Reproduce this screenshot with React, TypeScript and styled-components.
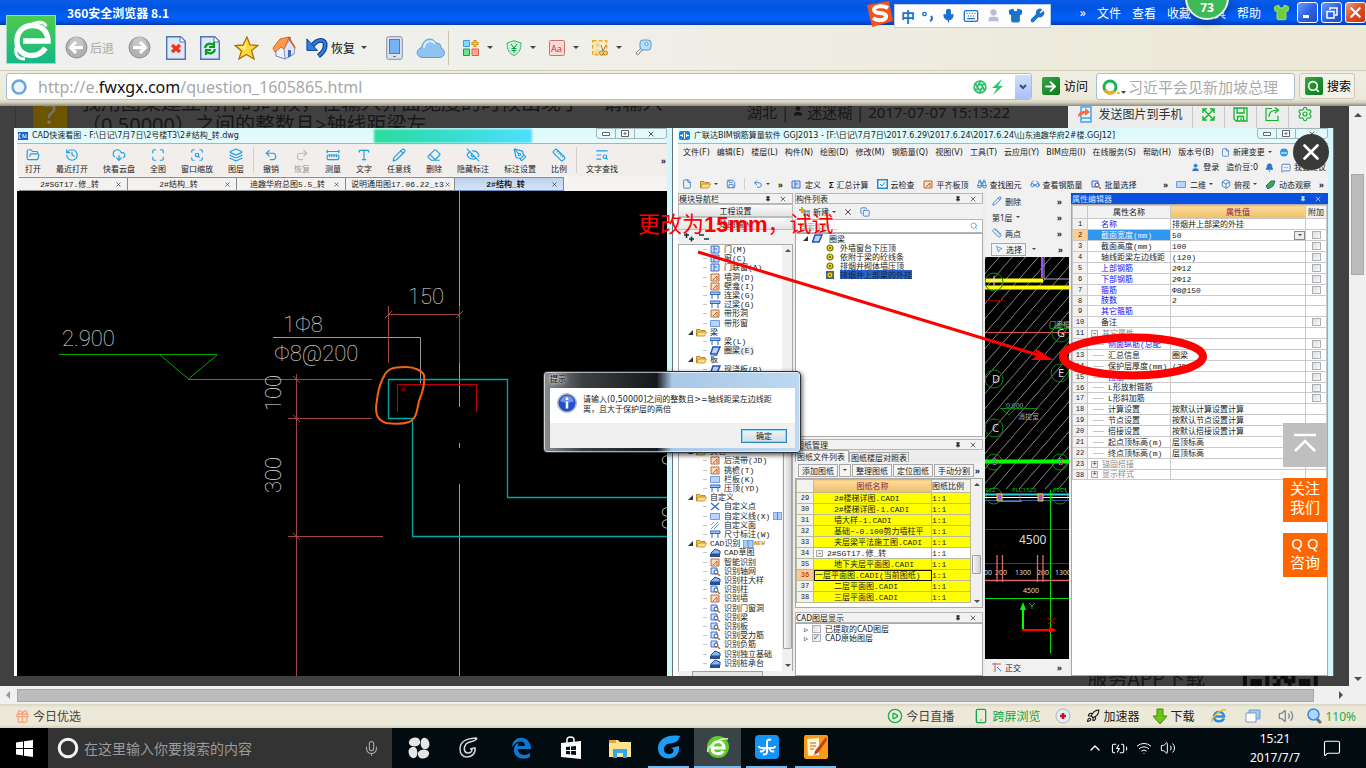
import React from 'react';
import styled, { createGlobalStyle, css } from 'styled-components';
import {
  Mic, Keyboard, Shirt, Wrench, Aperture, ArrowRight, Search, Save, Settings,
  X, FolderOpen, History, CloudDownload, Maximize, ScanSearch, Layers, Undo2, Redo2, Ruler,
  Type, Pencil, Eraser, EyeOff, PenTool, TextSearch, Pin, Bell, User, MessageSquareMore,
  File, Binoculars, Glasses, Box, Rocket, Volume2, Gift, Smartphone, CirclePlay, ChevronUp,
  Wifi, BatteryCharging, MessageSquare, Copy, MousePointer2, RulerDimensionLine,
} from 'lucide-react';

const ui = '"Noto Sans", "Noto Sans CJK SC", sans-serif';
const wide = '"DejaVu Sans", "Noto Sans CJK SC", sans-serif';
const song = '"Liberation Mono", "Noto Sans CJK SC", monospace';

const Global = createGlobalStyle`
  * { box-sizing: border-box; }
  body { margin: 0; background: #000; font-family: ${ui}; font-size: 12px; }
  button, input { font: inherit; color: inherit; padding: 0; margin: 0; border: 0; background: none; border-radius: 0; }
  button { white-space: nowrap; display: flex; align-items: center; justify-content: center; cursor: pointer; }
  a { color: inherit; text-decoration: none; }
  svg { display: block; flex: none; }
`;

const Page = styled.div`
  min-height: 100vh;
  display: flex;
  flex-direction: column;
  overflow: hidden;
  white-space: nowrap;
`;

/* ---------- browser chrome ---------- */

const TitleBar = styled.header`
  position: relative;
  height: 25px;
  display: flex;
  align-items: center;
  padding-left: 67px;
  color: #fff;
  background: linear-gradient(#0a5ce6 0, #0054e3 30%, #0060fb 75%, #0148d4 92%, #013ba8 100%);
`;
const AppName = styled.h1`
  margin: 0;
  flex: 1;
  font: bold 12px/24px "Noto Sans CJK SC", sans-serif;
`;
const Logo = styled.div`
  position: absolute;
  z-index: 3;
  left: 6px;
  top: 15px;
  width: 50px;
  height: 49px;
  border: 1px solid #9ed8bd;
  background: linear-gradient(#4ecb4f, #12b886);
`;
const ImeBar = styled.div`
  position: absolute;
  z-index: 4;
  left: 866px;
  top: 0;
  display: flex;
  align-items: center;
`;
const ImeKeys = styled.div`
  display: flex;
  align-items: center;
  gap: 7px;
  height: 24px;
  width: 157px;
  margin-top: 3px;
  padding-left: 6px;
  color: #1b74c9;
  background: #fdfdfe;
  border: 1px solid #b9cfe4;
  font: bold 14px/20px "Noto Sans CJK SC", sans-serif;
`;
const Menu = styled.nav`
  display: flex;
  align-items: center;
  gap: 11px;
  font-size: 12px;
  margin-right: 12px;
`;
const SkinButton = styled.button`
  margin-right: 4px;
`;
const Speed = styled.div`
  position: absolute;
  z-index: 5;
  left: 1185px;
  top: -24px;
  width: 44px;
  height: 44px;
  padding-top: 21px;
  border-radius: 50%;
  border: 2px solid #e5f2e5;
  background: #3fb957;
  color: #fff;
  text-align: center;
  font: bold 12px/18px "Noto Sans", sans-serif;
  box-shadow: 0 4px 6px rgba(0, 0, 0, 0.25);
`;
const WinButton = styled.button<{ $red?: boolean }>`
  width: 21px;
  height: 21px;
  margin-left: 3px;
  border: 1px solid #fff;
  border-radius: 3px;
  background: ${p => (p.$red ? 'linear-gradient(135deg,#f0a080,#e04a20 50%,#c8380c)' : 'linear-gradient(135deg,#6f9dff,#2b63e4 50%,#1e4cc8)')};
`;

const ToolBar = styled.div`
  height: 46px;
  padding-left: 62px;
  display: flex;
  align-items: center;
  background: linear-gradient(90deg, #eff0ef, #f0f0ea 40%, #ece9d8 90%);
  border-bottom: 1px solid #d2ccb4;
`;
const Tool = styled.button<{ $w: number; $start?: boolean }>`
  width: ${p => p.$w}px;
  height: 44px;
  gap: 2px;
  ${p => p.$start && css`justify-content: flex-start; padding-left: 3px;`}
`;
const Grey = styled.span`
  color: #a9a9a9;
`;
const Restore = styled.span`
  margin: 0 4px 0 1px;
  color: #111;
`;
const PairGroup = styled.div`
  display: flex;
  padding-left: 8px;
  border-left: 1px solid #c9c2a8;
`;
const Pair = styled.button`
  width: 43px;
  height: 34px;
  gap: 8px;
  justify-content: flex-start;
  padding-left: 6px;
`;
const Caret = styled.i<{ $s?: number }>`
  width: 0;
  height: 0;
  flex: none;
  border: ${p => p.$s ?? 3}px solid transparent;
  border-top-color: #444;
  border-bottom: 0;
`;

const AddressBar = styled.form`
  height: 35px;
  padding: 2px 11px 0 6px;
  display: flex;
  align-items: flex-start;
  background: linear-gradient(#efeee4, #ece9d8 80%, #d2cfbf 90%, #8c8a7e);
`;
const Field = styled.label<{ $w?: number }>`
  display: flex;
  align-items: center;
  height: 27px;
  ${p => (p.$w ? css`width: ${p.$w}px;` : css`flex: 1;`)}
  border: 1px solid #a9bfd6;
  border-radius: 3px;
  background: #fff;
  overflow: hidden;
`;
const Url = styled.div`
  flex: 1;
  padding-left: 7px;
  color: #a8a8a8;
  font: 16px/24px "Noto Sans", sans-serif;
  b { font-weight: 400; color: #111; }
`;
const DropButton = styled.button`
  width: 16px;
  height: 24px;
  margin-left: 8px;
  background: linear-gradient(#d3dffb, #a9c0f5);
`;
const Go = styled.button<{ $boxed?: boolean }>`
  height: 26px;
  gap: 4px;
  margin-left: ${p => (p.$boxed ? 4 : 9)}px;
  padding: 0 ${p => (p.$boxed ? 3 : 8)}px 0 ${p => (p.$boxed ? 5 : 1)}px;
  ${p => p.$boxed && css`border: 1px solid #ccc9ba; border-radius: 3px; background: #f3f2ea;`}
`;
const GreenSquare = styled.span`
  display: flex;
  width: 18px;
  height: 18px;
  align-items: center;
  justify-content: center;
  background: linear-gradient(135deg, #3aa548, #067a16);
  border-radius: 2px;
`;
const SearchInput = styled.input`
  flex: 1;
  min-width: 0;
  font: 15px/22px "Noto Sans CJK SC", sans-serif;
  outline: none;
  &::placeholder { color: #aaa; opacity: 1; }
`;

/* ---------- page under the viewer ---------- */

const Viewport = styled.div`
  flex: 1;
  display: flex;
  min-height: 580px;
`;
const Stage = styled.main`
  position: relative;
  flex: 1;
  overflow: hidden;
  display: flex;
  flex-direction: column;
  justify-content: space-between;
  background: #404040;
  color: #171717;
`;
const Question = styled.section`
  display: flex;
  height: 22px;
  margin-left: 15px;
  padding-left: 17px;
  border-left: 1px solid #353535;
`;
const Mark = styled.div`
  width: 34px;
  height: 22px;
  background: #6d5500;
  color: #777;
  text-align: center;
  font: 28px/14px "Noto Sans", sans-serif;
`;
const QuestionText = styled.p`
  margin: -14px 0 0 14px;
  width: 666px;
  font-size: 20px;
  line-height: 22px;
`;
const Meta = styled.div`
  display: flex;
  align-items: center;
  gap: 3px;
  height: 10px;
  font-size: 15px;
`;
const PageFoot = styled.section`
  display: flex;
  justify-content: flex-end;
  height: 15px;
  gap: 38px;
  padding-right: 24px;
  font: 20px/14px "Noto Sans CJK SC", sans-serif;
`;

const SendBar = styled.div`
  position: absolute;
  right: 29px;
  top: 0;
  height: 22px;
  display: flex;
  gap: 1px;
  background: #c8c8c8;
  color: #2b2b2b;
`;
const SendButton = styled.button<{ $w: number }>`
  width: ${p => p.$w}px;
  gap: 6px;
  padding-bottom: 6px;
  background: #ededed;
  color: #11b52c;
  span { color: #333; }
`;
const CloseViewer = styled.button`
  position: absolute;
  z-index: 6;
  right: 20px;
  top: 28px;
  width: 36px;
  height: 36px;
  border-radius: 50%;
  background: #3a3a3a;
  color: #fff;
`;
const SideStack = styled.aside`
  position: absolute;
  z-index: 6;
  right: 22px;
  top: 317px;
  display: flex;
  flex-direction: column;
  gap: 11px;
`;
const SideButton = styled.a<{ $grey?: boolean }>`
  width: 44px;
  height: 44px;
  display: flex;
  align-items: center;
  justify-content: center;
  text-align: center;
  white-space: normal;
  color: #fff;
  font-size: 15px;
  line-height: 19px;
  padding: 0 6px 4px;
  background: ${p => (p.$grey ? '#bfbfbf' : '#ff6600')};
`;

/* ---------- the enlarged picture ---------- */

const Shot = styled.div`
  position: absolute;
  inset: 22px 15px 10px 14px;
  display: flex;
  color: #222;
  font-size: 8px;
  line-height: 9px;
`;
const Win = styled.section<{ $right?: boolean }>`
  flex: 1;
  min-width: 0;
  display: flex;
  flex-direction: column;
  padding: 0 5px 0 ${p => (p.$right ? 5 : 3)}px;
  background: linear-gradient(90deg, #fff, #d3f6fb);
  border-right: 1px solid #5d7480;
  overflow: hidden;
`;
const WinTitle = styled.div`
  height: 16px;
  display: flex;
  align-items: center;
  gap: 4px;
  padding-left: 1px;
  background: linear-gradient(#dcf9fb, #e6fcfd);
  border-bottom: 1px solid #aab4b6;
  font-family: ${wide};
`;
const Smear = styled.span`
  flex: 1;
  margin-right: 60px;
  height: 14px;
  display: flex;
  justify-content: flex-end;
  &::before {
    content: '';
    width: 158px;
    height: 14px;
    background: linear-gradient(90deg, #2bdc9b, #38dcd0 50%, #4fe0ff);
    filter: blur(1px);
  }
`;
const Caption = styled.div`
  display: flex;
  align-self: flex-start;
  height: 11px;
  border: 1px solid #a5b4ba;
  border-radius: 0 0 3px 3px;
  button { width: 19px; border-right: 1px solid #a5b4ba; color: #555; }
  button:last-child { width: 31px; border: 0; }
`;
const CadTools = styled.div`
  height: 32px;
  display: flex;
  align-items: center;
  gap: 15px;
  padding: 0 1px 0 8px;
  background: #f1eeec;
`;
const CadTool = styled.button<{ $dim?: boolean }>`
  flex-direction: column;
  gap: 2px;
  color: ${p => (p.$dim ? '#999' : '#1d1d1d')};
  svg { color: ${p => (p.$dim ? '#bbb' : '#1ba1ea')}; }
`;
const Split = styled.i<{ $tall?: boolean }>`
  width: 1px;
  height: ${p => (p.$tall ? 26 : 12)}px;
  margin: 0 ${p => (p.$tall ? -6 : 0)}px;
  background: #d5cfcb;
`;
const Push = styled.span`
  margin-left: auto;
  font-weight: bold;
`;
const CadTabs = styled.div`
  height: 15px;
  display: flex;
  padding: 1px 0 0 2px;
  background: #f6f4f3;
`;
const CadTab = styled.button<{ $on?: boolean }>`
  width: 109px;
  height: 14px;
  padding: 0 5px;
  justify-content: space-between;
  font-family: ${song};
  border: 1px solid #8c8c8c;
  border-left-width: 0;
  background: #f4f2f1;
  ${p => p.$on && css`background: linear-gradient(#bcd0ee, #d7e3f5); border-color: #6c8fc5; font-weight: bold;`}
  span { flex: 1; }
`;
const Canvas = styled.div`
  flex: 1;
  min-height: 0;
  background: #000;
  overflow: hidden;
  svg { width: 100%; height: 100%; }
`;

const Bar = styled.div<{ $h: number; $gap?: number; $pad?: number; $end?: boolean }>`
  height: ${p => p.$h}px;
  flex: none;
  display: flex;
  align-items: center;
  gap: ${p => p.$gap ?? 6}px;
  padding: 0 ${p => p.$pad ?? 4}px;
  ${p => p.$end && css`justify-content: flex-end;`}
  background: #f1f1f1;
`;
const MenuBar = styled(Bar)`
  font-family: ${wide};
`;
const BarGroup = styled.div<{ $gap: number }>`
  display: flex;
  align-items: center;
  gap: ${p => p.$gap}px;
  margin-left: auto;
`;
const Mini = styled.button<{ $box?: boolean }>`
  gap: 3px;
  height: 12px;
  svg { color: #2f74c8; }
  ${p => p.$box && css`height: 13px; padding: 0 3px; border: 1px solid #a9a9a9; background: #f4f4f4;`}
`;
const Body = styled.div`
  flex: 1;
  min-height: 0;
  display: flex;
  gap: 2px;
  background: #ececec;
`;
const Column = styled.div<{ $w?: number }>`
  ${p => (p.$w ? css`width: ${p.$w}px;` : css`flex: 1;`)}
  display: flex;
  flex-direction: column;
  min-height: 0;
  min-width: 0;
`;
const PanelHead = styled.div<{ $blue?: boolean }>`
  height: 11px;
  flex: none;
  display: flex;
  align-items: center;
  gap: 8px;
  padding-right: 5px;
  border: 1px solid #b5b5b5;
  background: #f2f2f2;
  span { flex: 1; }
  ${p => p.$blue && css`background: #0a50e0; border-color: #0a50e0; color: #d8e6ff;`}
`;
const NavButton = styled.button`
  height: 13px;
  flex: none;
  border: 1px solid #bdbdbd;
  background: linear-gradient(#fafafa, #e4e4e4);
`;
const White = styled.div<{ $h?: number }>`
  ${p => (p.$h ? css`height: ${p.$h}px; flex: none;` : css`flex: 1; min-height: 0;`)}
  overflow: hidden;
  background: #fff;
  border: 1px solid #a9a9a9;
`;
const SheetArea = styled(White)`
  display: flex;
`;
const NavArea = styled.div`
  flex: 1;
  min-height: 0;
  display: flex;
  border: 1px solid #a9a9a9;
  border-bottom: 0;
  background: #fff;
  overflow: hidden;
`;
const NavTree = styled.ul`
  list-style: none;
  flex: 1;
  height: 423px;
  margin: 0;
  padding: 0;
  display: grid;
  grid-auto-rows: 1fr;
`;
const NavRow = styled.li<{ $leaf?: boolean; $on?: boolean }>`
  display: flex;
  align-items: center;
  gap: 3px;
  min-height: 0;
  height: 9px;
  margin-left: ${p => (p.$leaf ? 24 : 9)}px;
  font-family: ${song};
  ${p => p.$leaf && css`&::before { content: ''; width: 4px; border-top: 1px solid #c4c4c4; }`}
  span { ${p => p.$on && css`background: #ececec;`} }
`;
const ScrollBar = styled.div`
  width: 11px;
  flex: none;
  display: flex;
  flex-direction: column;
  align-items: center;
  justify-content: space-between;
  padding: 4px 0;
  background: #f0f0f0;
`;
const Thumb = styled.i<{ $h: number; $top: number }>`
  width: 9px;
  height: ${p => p.$h}px;
  margin-top: ${p => p.$top}px;
  margin-bottom: auto;
  border: 1px solid #a0a0a0;
  border-radius: 1px;
  background: linear-gradient(90deg, #f6f6f6, #d0d0d0);
`;
const NavScroll = styled.div`
  height: 5px;
  flex: none;
  display: flex;
  padding: 0 30px 0 14px;
  background: #f0f0f0;
  i { flex: 1; border: 1px solid #a0a0a0; border-bottom: 0; background: #e4e4e4; }
`;
const TreeRow = styled.div<{ $in: number; $on?: boolean }>`
  height: 9px;
  display: flex;
  align-items: center;
  gap: 4px;
  padding-left: ${p => p.$in}px;
  span, svg:last-of-type { ${p => p.$on && css`background: #2a62c4; color: #0c1c38;`} }
  span { margin-left: 2px; }
`;
const FindBox = styled.label`
  display: flex;
  align-items: center;
  height: 14px;
  flex: none;
  padding-right: 4px;
  border: 1px solid #b5b5b5;
  background: #fff;
  color: #2f8ad8;
  input { flex: 1; min-width: 0; padding-left: 3px; font-size: 8px; }
  input::placeholder { color: #999; }
`;
const SheetTabs = styled.div`
  display: flex;
  height: 12px;
  flex: none;
  align-items: flex-end;
  button { height: 10px; border: 1px solid #a9a9a9; border-bottom: 0; padding: 0 1px; background: #ececec; }
  button:first-child { height: 12px; background: #f6f6f6; padding-right: 3px; }
`;
const SheetTable = styled.table`
  flex: 1;
  border-collapse: collapse;
  table-layout: fixed;
  width: 100%;
  align-self: flex-start;
  font-family: ${song};
  th, td { padding: 0; border: 1px solid #b7bb9a; overflow: hidden; font-weight: 400; text-align: left; height: 11px; line-height: 9px; }
  thead th { height: 13px; background: #f1f1f1; }
  thead th:nth-child(2) { background: linear-gradient(#fbdc9a, #efbf6a); color: #8b2252; text-align: center; }
  tbody th { background: #f1f1f1; text-align: center; font-size: 7px; }
`;
const SheetRow = styled.tr<{ $kind?: string }>`
  td { background: ${p => (p.$kind === 'file' ? '#fff' : '#ffff00')}; }
  td:nth-child(2) { padding-left: ${p => (p.$kind === 'file' ? 2 : p.$kind === 'on' ? 1 : 20)}px; }
  ${p => p.$kind === 'on' && css`
    td:nth-child(2) { outline: 1px solid #111; outline-offset: -1px; }
    && th { background: #ffc98a; color: #a02020; }
  `}
`;
const PropTable = styled.table`
  width: 100%;
  border-collapse: collapse;
  table-layout: fixed;
  background: #fff;
  font-family: ${song};
  th, td { height: 11px; padding: 0; border: 1px solid #c9c9c9; overflow: hidden; font-weight: 400; text-align: left; line-height: 9px; }
  thead th { height: 13px; text-align: center; background: #f1f1f1; }
  thead th:nth-child(3) { background: linear-gradient(#fbdc9a, #efbf6a); color: #8b2252; }
  tbody th { text-align: center; background: #f1f1f1; font-size: 7px; }
  tbody tr:nth-child(8n) > * { height: 10px; line-height: 8px; }
  td:nth-child(3) { padding-left: 1px; }
  td:nth-child(4) { padding-left: 6px; }
`;
const PropRow = styled.tr<{ $c: string; $kind: string; $on?: boolean }>`
  td:nth-child(2) {
    color: ${p => p.$c};
    padding-left: ${p => (p.$kind === 'sub' ? 5 : p.$kind === 'group' ? 3 : 13)}px;
  }
  ${p => p.$on && css`
    && th { background: #ffcf8f; }
    td:nth-child(2) { background: #3096ee; }
  `}
`;
const CellLine = styled.span`
  display: flex;
  align-items: center;
  gap: 4px;
  height: 9px;
`;
const Dash = styled.i`
  width: 11px;
  border-top: 1px solid #c4c4c4;
`;
const Plus = styled.button`
  width: 7px;
  height: 7px;
  border: 1px solid #aaa;
  background: #eee;
  font: 7px/5px "Liberation Mono", monospace;
  color: #222;
`;
const Tick = styled.input`
  appearance: none;
  display: block;
  width: 9px;
  height: 8px;
  border: 1px solid #aab0b5;
  background: linear-gradient(135deg, #dcdcdc, #fafafa);
  &:checked::after { content: '✓'; display: block; font: bold 8px/6px "DejaVu Sans", sans-serif; color: #2d5fae; }
`;
const ValueCell = styled.div`
  display: flex;
  align-items: center;
  height: 9px;
  justify-content: space-between;
`;
const CellDrop = styled.button`
  width: 11px;
  height: 9px;
  border: 1px solid #8a8a8a;
  background: #ededed;
`;

/* ---------- message box ---------- */

const Dialog = styled.div`
  position: absolute;
  z-index: 3;
  left: 529px;
  top: 243px;
  width: 258px;
  height: 82px;
  padding: 0 5px 4px 6px;
  display: flex;
  flex-direction: column;
  border: 1px solid #2d3338;
  border-radius: 4px;
  background: linear-gradient(90deg, #8b8f92 0, #3c4043 15%, #15181a 44%, #a9c8e6 50%, #bcd8f2 100%);
  box-shadow: inset 0 0 0 1px rgba(255, 255, 255, 0.6), 1px 2px 5px rgba(0, 0, 0, 0.7);
`;
const DialogTitle = styled.div`
  height: 16px;
  line-height: 14px;
  color: #0e0e0e;
  text-shadow: 0 0 4px #fff, 0 0 4px #fff;
`;
const DialogBody = styled.div`
  flex: 1;
  display: flex;
  gap: 6px;
  padding: 5px 7px;
  background: #fff;
  font-family: ${wide};
  line-height: 10px;
  p { margin: 2px 0 0; }
`;
const DialogFoot = styled.div`
  height: 25px;
  display: flex;
  align-items: center;
  justify-content: flex-end;
  padding-right: 8px;
  background: #f0f0f0;
  button {
    width: 46px;
    height: 14px;
    border: 1px solid #2c89b5;
    box-shadow: inset 0 0 0 1px #8bd8f4;
    background: linear-gradient(#f0f4f6, #cfdde4);
  }
`;
const MarkUp = styled.svg`
  position: absolute;
  z-index: 4;
  inset: 0;
  pointer-events: none;
`;
const Note = styled.div`
  position: absolute;
  z-index: 5;
  left: 624px;
  top: 84px;
  color: #f00;
  font: 22px/26px "Liberation Sans", "Noto Sans CJK SC", sans-serif;
`;

/* ---------- bottom bars ---------- */

const PageScrollV = styled.div`
  width: 17px;
  display: flex;
  flex-direction: column;
  align-items: center;
  justify-content: space-between;
  padding: 7px 0 5px;
  background: #f0f0f0;
`;
const PageThumbV = styled.i`
  width: 13px;
  height: 101px;
  margin-top: 57px;
  margin-bottom: auto;
  border: 1px solid #a8a8a8;
  background: #bcbcbc;
`;
const PageScrollH = styled.div`
  height: 18px;
  display: flex;
  align-items: center;
  gap: 7px;
  padding: 0 23px 0 6px;
  background: #f0f0f0;
`;
const PageThumbH = styled.i`
  flex: 1;
  height: 13px;
  margin-right: 18px;
  border: 1px solid #a8a8a8;
  background: #bcbcbc;
`;
const Tri = styled.i<{ $d: 'up' | 'down' | 'left' | 'right'; $c?: string; $s?: number }>`
  width: 0;
  height: 0;
  flex: none;
  border: ${p => p.$s ?? 4}px solid transparent;
  ${p => ({ up: 'border-top-width:0;border-bottom-color', down: 'border-bottom-width:0;border-top-color', left: 'border-left-width:0;border-right-color', right: 'border-right-width:0;border-left-color' })[p.$d]}: ${p => p.$c ?? '#505050'};
`;
const StatusBar = styled.div`
  height: 24px;
  display: flex;
  align-items: center;
  padding: 0 10px 0 15px;
  color: #555;
  background: linear-gradient(#d9d6c4, #ece9d8 15%, #ece9d8 85%, #d6d2bd);
`;
const StatusItem = styled.button<{ $ml?: number; $c?: string; $push?: boolean }>`
  gap: 3px;
  margin-left: ${p => (p.$push ? 'auto' : `${p.$ml ?? 0}px`)};
  color: ${p => p.$c ?? '#444'};
`;
const TaskBar = styled.footer`
  height: 40px;
  display: flex;
  align-items: center;
  background: #020c10;
  color: #fff;
`;
const Start = styled.button`
  width: 48px;
  height: 40px;
  background: #000;
`;
const TaskSearch = styled.label`
  width: 344px;
  height: 40px;
  padding: 0 12px 0 9px;
  display: flex;
  align-items: center;
  gap: 5px;
  background: #333;
  color: #aaa;
  margin-right: 2px;
  input { flex: 1; min-width: 0; font-size: 14px; color: #ccc; }
  input::placeholder { color: #9a9a9a; opacity: 1; }
`;
const TaskApp = styled.button<{ $open?: boolean; $active?: boolean; $gap?: boolean }>`
  width: ${p => (p.$active ? 47 : 41)}px;
  margin: 0 ${p => (p.$active ? 1 : 4)}px;
  height: 40px;
  ${p => p.$gap && css`margin-left: 9px;`}
  ${p => p.$open && css`border-bottom: 2px solid #76b9ed;`}
  ${p => p.$active && css`background: #3a4446;`}
`;
const Tray = styled.div`
  margin-left: auto;
  padding-right: 25px;
  display: flex;
  align-items: center;
  gap: 8px;
`;
const Clock = styled.time`
  width: 60px;
  margin: 0 10px 0 61px;
  text-align: center;
  font: 12px/19px "Noto Sans", sans-serif;
`;

/* ---------- drawings ---------- */

const ELogo = () => (
  <svg width="48" height="47" viewBox="0 0 48 47" fill="none" stroke="#fff">
    <path d="M16 25h25C41 15 34 9.500 25.500 9.500 16 9.500 10 16 10 25s6 14.500 14.500 14.500c7 0 11-3 14-7.500" strokeWidth="5.500" />
    <path d="M20 12C28 4 38 5 39 10.500" strokeWidth="3" />
    <path d="M10 29c-3 7-1 14 8 14" strokeWidth="3" />
  </svg>
);
const RoundArrow = ({ flip }: { flip?: boolean }) => (
  <svg width="23" height="23" viewBox="0 0 23 23">
    <circle cx="11.500" cy="11.500" r="10.500" fill="#b1b1b1" stroke="#8f8f8f" />
    <circle cx="11.500" cy="8" r="7" fill="#c6c6c6" />
    <path d={flip ? 'M5 11.500h12M12 6l5.500 5.500L12 17' : 'M18 11.500H6M11 6l-5.500 5.500L11 17'} stroke="#fff" strokeWidth="3" fill="none" />
  </svg>
);
const PageIcon = ({ kind }: { kind: 'stop' | 'reload' }) => (
  <svg width="20" height="24" viewBox="0 0 20 24">
    <path d="M.7.700h14l4.600 4.600v18H.7z" fill="#dbe9fb" stroke="#5375ad" strokeWidth="1.400" />
    <path d="M14 1v5h5" fill="#fff" stroke="#5375ad" />
    {kind === 'stop'
      ? <path d="M6 9l8 7M14 9l-8 7" stroke="#f5330c" strokeWidth="3.500" />
      : <path d="M5 12c1-5 6-5 8-3M14 6v5h-5M15 13c-1 5-6 5-8 3M6 19v-5h5" stroke="#0f9a1c" strokeWidth="2.200" fill="none" />}
  </svg>
);
const StarIcon = () => (
  <svg width="25" height="24" viewBox="0 0 25 24"><path d="M13 1l3 8 8 .5-6.500 5L20 23l-7.500-4.500L5 23l2.500-8L1 9.500l8-.5z" fill="#ffd83b" stroke="#a5720c" strokeWidth="1.300" /><path d="M12.500 4l-2 6.500-5 .5 6 3z" fill="#fff3a8" /></svg>
);
const HomeIcon = () => (
  <svg width="24" height="24" viewBox="0 0 24 24"><path d="M4 12v8l9 3 9-5v-9l-6-6z" fill="#eef3ff" stroke="#6c84b8" /><path d="M15 14h4v6l-4 2z" fill="#4169b4" /><path d="M12 13l5-9 6 8-1 6-9 5z" fill="#dce6f8" stroke="#8497c2" /><path d="M16 14h3v6l-3 1.500z" fill="#4169b4" /><path d="M1 12L8 3l9-2-5 12-3-2-6 5z" fill="#ff9a4a" stroke="#d46a1c" /><path d="M16 1h3l-1 4z" fill="#d44a1c" /><path d="M17 2l6 10" stroke="#d46a1c" strokeWidth="1.500" /></svg>
);
const UndoIcon = () => (
  <svg width="23" height="23" viewBox="0 0 24 24"><path d="M7 11c6-9 15-8 14-1 0 5-3 8-7 11" fill="none" stroke="#0b3f95" strokeWidth="5" /><path d="M7 11c6-9 15-8 14-1 0 5-3 8-7 11" fill="none" stroke="#2f7fe0" strokeWidth="2.500" /><path d="M2 3v12h11z" fill="#2f7fe0" stroke="#0b3f95" /></svg>
);
const PhoneIcon = () => (
  <svg width="17" height="24" viewBox="0 0 17 24"><rect x=".7" y=".7" width="15.600" height="22.600" rx="2" fill="#dce2ec" stroke="#8590a8" /><rect x="3.500" y="3.500" width="10" height="14" fill="#78b1f5" stroke="#5878b5" /><path d="M7 20.500h3" stroke="#777" /></svg>
);
const CloudIcon = () => (
  <svg width="29" height="22" viewBox="0 0 29 22"><path d="M6 20.500c-7-1-6-9 0-10C6 2 16-1 20 6c4 0 5 2 5 5 5 2 4 9-1 9.500z" fill="#90c3f0" stroke="#5c98d4" /><path d="M8 11c0-7 8-9 11-4" stroke="#d5ebff" fill="none" strokeWidth="2" /></svg>
);
const AppsIcon = () => (
  <svg width="16" height="16" viewBox="0 0 16 16"><path d="M.5.500h6v6h-6z" fill="#8fd3ff" stroke="#3a9fe0" /><path d="M.5 9h6v6.500h-6z" fill="#6de394" stroke="#1a9e45" /><path d="M9 9h6.500v6.500H9z" fill="#ffaa96" stroke="#ee5a3c" /><path d="M12 0v7M8.500 3.500h7" stroke="#d68a10" strokeWidth="3" /><path d="M12 1v5M9.500 3.500h5" stroke="#ffe04a" /></svg>
);
const ShieldIcon = () => (
  <svg width="16" height="16" viewBox="0 0 16 16"><path d="M8 .7l7 2.300c0 7-2 10-7 12.500C3 13 1 10 1 3z" fill="#c9f3d5" stroke="#3db56c" /><path d="M5 4l3 4 3-4M8 8v5M5.500 8.500h5M5.500 10.500h5" stroke="#169a4c" fill="none" /></svg>
);
const AaIcon = () => (
  <svg width="16" height="16" viewBox="0 0 16 16"><rect x=".5" y=".5" width="15" height="15" rx="1" fill="#fbdada" stroke="#d36e6e" /><text x="2" y="11.500" fontSize="9" fontFamily="Noto Sans" fill="#c33">Aa</text></svg>
);
const ClipIcon = () => (
  <svg width="16" height="16" viewBox="0 0 16 16"><rect x=".7" y=".7" width="14" height="14" fill="#fdf0c8" stroke="#eda72c" strokeDasharray="4 2" strokeWidth="1.400" /><circle cx="5.500" cy="5" r="2.500" fill="#f3d79a" /><path d="M2 14c0-7 7-7 7 0z" fill="#f3d79a" /><path d="M9 5l2 6M14 5l-3 6" stroke="#777" /><circle cx="9.500" cy="13" r="2" fill="#ffd27a" stroke="#c87f10" /><circle cx="13.500" cy="13" r="2" fill="#ffd27a" stroke="#c87f10" /></svg>
);
const KeyIcon = () => (
  <svg width="17" height="17" viewBox="0 0 17 17"><path d="M6 9l-5 5 1 2 2-1 1-2 2-1 1-2" fill="#eee" stroke="#888" /><rect x="5" y="1" width="11" height="10" rx="3" fill="#b9def9" stroke="#5c98cc" /><circle cx="11.500" cy="5" r="1.600" fill="#fff" stroke="#5c98cc" /></svg>
);
const SogouIcon = () => (
  <svg width="28" height="28" viewBox="0 0 28 28"><path d="M1 5L23 1l4 20L6 27z" fill="#f4531c" /><path d="M22 8c-5-3-14-2-14 2 0 5 13 1 12 7-1 4-9 4-13 1" fill="none" stroke="#fff" strokeWidth="4" /></svg>
);
const FolderIcon = () => (
  <svg width="11" height="9" viewBox="0 0 11 9"><path d="M.5 8V1.500h3.500l1 1h4V4" fill="#f3c455" stroke="#b98722" /><path d="M.5 8l2-4h8l-2 4z" fill="#ffe08a" stroke="#b98722" strokeWidth=".8" /></svg>
);
const leafShapes: Record<string, React.ReactNode> = {
  door: <><path d="M1 1h8v7H1z" fill="#cfe0fb" stroke="#3d6fd0" /><path d="M4 1v7M4 4h3" stroke="#3d6fd0" /></>,
  window: <path d="M.5 1.500h9v6h-9z" fill="#bcd4fa" stroke="#6f9be4" />,
  brick: <><path d="M1 1h8v7H1z" fill="#f8dcc0" stroke="#b86a34" /><path d="M3 7l4-4v4" fill="none" stroke="#b86a34" /></>,
  beam: <path d="M0 1h10v2.500H0zM2 4v4M8 4v4" fill="#a7c8f7" stroke="#2d62c9" />,
  slab: <path d="M3 1h7L7 8H.5z" fill="#bcd4fa" stroke="#2451b5" strokeWidth="1.500" />,
  cross: <path d="M1 1l8 7M9 1L1 8" stroke="#2d6fd0" strokeWidth="1.300" />,
  hatch: <path d="M1 4l3-3M1 8l7-7M4 8l5-5" stroke="#5d93e2" />,
  scan: <><path d="M1 1h6v6H1z" fill="#d6e4fb" stroke="#3d6fd0" /><circle cx="6" cy="5" r="2" fill="#fff" stroke="#234f9c" /><path d="M7 6l3 3" stroke="#c26a2a" strokeWidth="1.500" /></>,
  cad: <><path d="M1 5l4-4 5 2v3H1z" fill="#87b6f4" stroke="#244ba0" /><path d="M0 6h10v3H0z" fill="#2b4d94" /></>,
};
const Leaf = ({ k }: { k: string }) => <svg width="11" height="9" viewBox="0 0 11 9">{leafShapes[k]}</svg>;
const Gear = () => <svg width="8" height="8" viewBox="0 0 8 8"><circle cx="4" cy="4" r="3" fill="#e9d516" stroke="#77700a" strokeWidth="1.200" /><circle cx="4" cy="4" r="1" fill="#5b5500" /></svg>;
const Corner = () => <svg width="5" height="5" viewBox="0 0 5 5"><path d="M5 0v5H0z" fill="#333" /></svg>;

const CadText = styled.text`
  fill: #e2e2e2;
  font-family: "Liberation Sans Narrow", Roboto, sans-serif;
  font-weight: 100;
  font-size: 22px;
`;
const CadDrawing = () => (
  <svg viewBox="17 191 651 485" preserveAspectRatio="xMinYMin slice" fill="none" strokeWidth="1">
    <g stroke="#9a9a9a">
      <path d="M459.500 191v216M459.500 443v5M459.500 484v192M273 337.500h147.500v46" />
    </g>
    <g stroke="#a04848">
      <path d="M388.500 306v57M459.500 306v57M388 314.500h72M385 318l7-7M456 318l7-7" />
      <path d="M296.500 374v302M288 379.500h84M288 418.500h84M288 536.500h95M293 376l7 7M293 415l7 7M293 533l7 7" />
    </g>
    <path d="M59 354.500h158M160 355l28.500 24L217 355M188 379.500h100" stroke="#00a800" />
    <path d="M668 497.500H507.500v-118h-119v39h24V536.500H668" stroke="#00a8a8" strokeWidth="1.300" />
    <path d="M397.500 412v-27.500h79V412M402 389.500a1.500 1.500 0 1 0 3 0a1.500 1.500 0 1 0-3 0" stroke="#c00000" />
    <path d="M383 378c4-9 8-11 23-11 9 0 16 4 18 8 1 6 0 14-5 26-2 8-2 18-10 21-6 2-16 2-23 1-8-3-12-8-9-23 1-10 3-16 6-22z" stroke="#f26410" strokeWidth="2" />
    <CadText x="62" y="346">2.900</CadText>
    <CadText x="408" y="304">150</CadText>
    <CadText x="283" y="332">1Φ8</CadText>
    <CadText x="274" y="361">Φ8@200</CadText>
    <CadText transform="translate(281 411) rotate(-90)">100</CadText>
    <CadText transform="translate(281 493) rotate(-90)">300</CadText>
    <CadText transform="translate(678 466) rotate(-90)">00</CadText>
    <CadText transform="translate(678 530) rotate(-90)">00</CadText>
  </svg>
);
const PlanDrawing = () => (
  <svg viewBox="985 257 84 402" preserveAspectRatio="xMinYMin slice" fill="none">
    <defs>
      <pattern id="hatch" width="13" height="15" patternUnits="userSpaceOnUse"><path d="M-1 16L14-1" stroke="#858585" /></pattern>
    </defs>
    <path d="M985 257h84v232h-84z" fill="url(#hatch)" />
    <path d="M1042 257v21" stroke="#9b4dff" strokeWidth="2" />
    <path d="M1044 257v22h25" stroke="#aaa" />
    <path d="M985 280.500h58M985 287.500h84" stroke="#ff0" strokeWidth="4" />
    <path d="M994 276v14M988 280h12" stroke="#ddd" />
    <path d="M985 300.500h20" stroke="#800" />
    <path d="M985 332.500h84" stroke="#e05050" />
    <g stroke="#0a8a0a"><circle cx="994" cy="282" r="9" /><circle cx="1061" cy="333" r="9" /><circle cx="994" cy="379" r="9" /><circle cx="1060" cy="373" r="9" /><circle cx="994" cy="428" r="9" /><circle cx="994" cy="462" r="8" /><circle cx="1060" cy="462" r="8" /><circle cx="994" cy="496" r="8" /><circle cx="1060" cy="496" r="8" /><path d="M1000 408.500h38M1002 409l7 6 6-6M1050 328.500h19" /></g>
    <g fill="#ddd" fontFamily="Noto Sans" fontSize="11"><text x="992" y="383">D</text><text x="1058" y="377">E</text><text x="992" y="432">C</text><text x="1057" y="337">G</text></g>
    <g fill="#aaa" fontFamily="Noto Sans CJK SC" fontSize="7"><text x="1006" y="408">0.000</text><text x="1018" y="419">消控室</text><text x="1049" y="327">门廊框</text></g>
    <path d="M985 461.500h84" stroke="#0f0" strokeWidth="4" />
    <g fill="#b060b0" fontFamily="Noto Sans" fontSize="8"><text x="992" y="465">B</text><text x="1058" y="465">B</text></g>
    <g fill="#00c000" fontFamily="Noto Sans" fontSize="6"><text x="985" y="492">922</text><text x="1012" y="492">PLC1523</text><text x="1053" y="492">PEC1</text></g>
    <path d="M985 494.500h84" stroke="#35cbd8" strokeWidth="2" /><path d="M985 497.500h84" stroke="#fff" /><path d="M985 500.500h84" stroke="#2b5fa0" />
    <path d="M997 494h5v7h-5zM1038 494h5v7h-5z" fill="#b14be0" stroke="#e8d810" />
    <path d="M1001 501.500h21M1020 494v7" stroke="#c55" />
    <path d="M985 529.500h84M985 563.500h84" stroke="#006b00" />
    <path d="M1050.500 490v163M985 598.500h84" stroke="#00e000" />
    <g fill="#ddd" fontFamily="Noto Sans"><text x="1019" y="544" fontSize="12">4500</text><text x="1023" y="593" fontSize="7">4500</text><text x="980" y="575" fontSize="7">200</text><text x="995" y="575" fontSize="7">200</text><text x="1015" y="575" fontSize="7">1300</text><text x="1037" y="575" fontSize="7">200</text><text x="1055" y="575" fontSize="7">1300</text></g>
    <path d="M985 580.500h84M997 555v27M1002.500 555v27M1037.500 555v27M1043 555v27" stroke="#d66" strokeWidth="1.300" />
    <path d="M1023 631v-22" stroke="#0f0" strokeWidth="2" /><path d="M1023 602l-3 8h6z" fill="#0f0" />
    <path d="M1022 630h28" stroke="#f00" strokeWidth="2" /><path d="M1057 630l-8-3v6z" fill="#f00" />
    <path d="M1029 603l3 3 3-3M1032 606v3" stroke="#0c0" /><path d="M1048 618l7 6M1055 618l-7 6" stroke="#c00" />
  </svg>
);

/* ---------- data ---------- */

const cadTools: [string, React.ElementType, boolean?][] = [
  ['打开', FolderOpen], ['最近打开', History], ['快看云盘', CloudDownload], ['全图', Maximize], ['窗口缩放', ScanSearch], ['图层', Layers],
  ['撤销', Undo2, true], ['恢复', Redo2], ['测量', RulerDimensionLine], ['文字', Type], ['任意线', Pencil], ['删除', Eraser],
  ['隐藏标注', EyeOff], ['标注设置', PenTool], ['比例', Ruler], ['文字查找', TextSearch, true],
];
const cadTabs = ['2#SGT17.修_转', '2#结构_转', '迪趣华府总图5.5_转', '说明通用图17.06.22_t3', '2#结构_转'];
const menus = ['文件(F)', '编辑(E)', '楼层(L)', '构件(N)', '绘图(D)', '修改(M)', '钢筋量(Q)', '视图(V)', '工具(T)', '云应用(Y)', 'BIM应用(I)', '在线服务(S)', '帮助(H)', '版本号(B)'];

type NavItem = [string, string?];
const nav: NavItem[] = [
  ['门(M)', 'door'], ['窗(C)', 'door'], ['门联窗(A)', 'door'], ['墙洞(D)', 'brick'], ['壁龛(I)', 'brick'], ['连梁(G)', 'beam'],
  ['过梁(G)', 'beam'], ['带形洞', 'brick'], ['带形窗', 'window'], ['梁'], ['梁(L)', 'beam'], ['圈梁(E)', 'slab'], ['板'], ['现浇板(B)', 'slab'],
  ['', ''], ['', ''], ['', ''], ['', ''], ['', ''], ['', ''], ['', ''], ['', ''],
  ['其它'], ['后浇带(JD)', 'brick'], ['挑檐(T)', 'brick'], ['栏板(K)', 'window'], ['压顶(YD)', 'beam'],
  ['自定义'], ['自定义点', 'cross'], ['自定义线(X)', 'window'], ['自定义面', 'hatch'], ['尺寸标注(W)', 'beam'],
  ['CAD识别'], ['CAD草图', 'cad'], ['智能识别', 'brick'], ['识别轴网', 'scan'], ['识别柱大样', 'cad'], ['识别柱', 'scan'], ['识别墙', 'brick'],
  ['识别门窗洞', 'scan'], ['识别梁', 'scan'], ['识别板', 'scan'], ['识别受力筋', 'scan'], ['识别负筋', 'scan'], ['识别独立基础', 'cad'], ['识别桩承台', 'cad'],
];
const sheets: [number, string, string?][] = [
  [29, '2#楼梯详图.CADI'], [30, '2#楼梯详图-1.CADI'], [31, '墙大样-1.CADI'], [32, '基础~-0.100剪力墙柱平'], [33, '夹层梁平法施工图.CADI'],
  [34, '2#SGT17.修_转', 'file'], [35, '地下夹层平面图.CADI'], [36, '一层平面图.CADI(当前图纸)', 'on'], [37, '二层平面图.CADI'], [38, '三层平面图.CADI'],
];
const BLUE = '#1010ff';
const props: [number, string, string, string, string, boolean][] = [
  [1, '名称', '排烟井上部梁的外挂', BLUE, 'top', false], [2, '截面宽度(mm)', '50', '#e8f4ff', 'top', true], [3, '截面高度(mm)', '100', '#222', 'top', true],
  [4, '轴线距梁左边线距', '(120)', '#222', 'top', true], [5, '上部钢筋', '2Φ12', BLUE, 'top', true], [6, '下部钢筋', '2Φ12', BLUE, 'top', true],
  [7, '箍筋', 'Φ8@150', BLUE, 'top', true], [8, '肢数', '2', BLUE, 'top', false], [9, '其它箍筋', '', BLUE, 'top', false], [10, '备注', '', '#222', 'top', true],
  [11, '其它属性', '', '#8a8a8a', 'group', false], [12, '侧面纵筋(总配', '', BLUE, 'sub', true], [13, '汇总信息', '圈梁', '#222', 'sub', true],
  [14, '保护层厚度(mm)', '(25)', '#222', 'sub', true], [15, '拉筋', '', BLUE, 'sub', true], [16, 'L形放射箍筋', '', '#222', 'sub', true], [17, 'L形斜加筋', '', '#222', 'sub', true],
  [18, '计算设置', '按默认计算设置计算', '#222', 'sub', false], [19, '节点设置', '按默认节点设置计算', '#222', 'sub', false], [20, '搭接设置', '按默认搭接设置计算', '#222', 'sub', false],
  [21, '起点顶标高(m)', '层顶标高', '#222', 'sub', false], [22, '终点顶标高(m)', '层顶标高', '#222', 'sub', false],
  [23, '锚固搭接', '', '#8a8a8a', 'group', false], [38, '显示样式', '', '#8a8a8a', 'group', false],
];

const PinClose = () => (<><Pin size={6} fill="currentColor" /><X size={8} /></>);

const CaptionButtons = () => (
  <Caption>
    <button aria-label="最小化"><svg width="8" height="4" viewBox="0 0 8 4"><path d="M.5.500h7v3h-7z" fill="#fff" stroke="#666" /></svg></button>
    <button aria-label="还原"><svg width="8" height="7" viewBox="0 0 8 7"><path d="M.5.500h7v6h-7zM3 3h2v1H3z" fill="#fff" stroke="#666" /></svg></button>
    <button aria-label="关闭"><X size={8} strokeWidth={3} /></button>
  </Caption>
);

const CadWindow = () => (
  <Win>
    <WinTitle>
      <svg width="10" height="8" viewBox="0 0 10 8"><path d="M0 0h10v8H0z" fill="#1e62c8" /><path d="M1 2h2M1 2v4h2M5 6V2l2 4M8 2v4" stroke="#cfe2ff" fill="none" /></svg>
      CAD快速看图 - F:\日记\7月7日\2号楼T3\2#结构_转.dwg
      <Smear />
      <CaptionButtons />
    </WinTitle>
    <CadTools>
      {cadTools.map(([name, Icon, split], i) => (
        <React.Fragment key={name}>
          {split && <Split $tall />}
          <CadTool $dim={i === 7}><Icon size={14} strokeWidth={2} />{name}</CadTool>
        </React.Fragment>
      ))}
      <Push>»</Push>
    </CadTools>
    <CadTabs>
      {cadTabs.map((t, i) => <CadTab key={i} $on={i === 4}><span>{t}</span><X size={7} /></CadTab>)}
    </CadTabs>
    <Canvas><CadDrawing /></Canvas>
  </Win>
);

const NavPanel = () => (
  <Column $w={115}>
    <PanelHead><span>模块导航栏</span><PinClose /></PanelHead>
    <NavButton>工程设置</NavButton>
    <NavButton>绘图输入</NavButton>
    <Bar $h={14} $pad={5}>
      <svg width="28" height="10" viewBox="0 0 28 10"><path d="M1 3h5M3.500 1v5M6 7h5M8.500 4.500v5M16 3h5M21 7h5" stroke="#0d3a3a" strokeWidth="1.600" /></svg>
    </Bar>
    <NavArea>
      <NavTree>
        {nav.map(([name, kind], i) => kind === undefined ? (
          <NavRow key={i}><Corner /><FolderIcon />{name}
            {name === 'CAD识别' && <svg width="26" height="8" viewBox="0 0 26 8"><path d="M0 0h10v8H0zM5 0v8" fill="#a9cdf8" stroke="#4e8bd8" /><text x="11" y="5" fontSize="6" fontStyle="italic" fontWeight="bold" fill="#c89400">NEW</text></svg>}
          </NavRow>
        ) : (
          <NavRow key={i} $leaf={kind !== ''} $on={name === '圈梁(E)'}>{kind && <Leaf k={kind} />}<span>{name}</span>
            {name === '自定义线(X)' && <svg width="9" height="8" viewBox="0 0 9 8"><path d="M0 0h9v8H0zM4.500 0v8" fill="#a9cdf8" stroke="#4e8bd8" /></svg>}
          </NavRow>
        ))}
      </NavTree>
      <ScrollBar><Tri $d="up" $s={3} /><Thumb $h={275} $top={122} /><Tri $d="down" $s={3} /></ScrollBar>
    </NavArea>
    <NavScroll><i /></NavScroll>
  </Column>
);

const ListPanel = () => (
  <Column $w={188}>
    <PanelHead><span>构件列表</span><PinClose /></PanelHead>
    <Bar $h={15} $pad={4} $gap={7}>
      <Mini><svg width="11" height="9" viewBox="0 0 11 9"><path d="M3 0v6M0 3h6" stroke="#d9a514" strokeWidth="2" /><path d="M5 4h6v5H5z" fill="#a9c8f0" stroke="#4772b0" /></svg>新建<Caret $s={2} /></Mini>
      <Mini aria-label="删除"><X size={10} color="#222" /></Mini>
      <Mini aria-label="复制"><Copy size={10} /></Mini>
    </Bar>
    <FindBox><input placeholder="搜索构件..." aria-label="搜索构件" /><Search size={8} /></FindBox>
    <White $h={204}>
      <TreeRow $in={7}><Corner /><Leaf k="slab" /><span>圈梁</span></TreeRow>
      {['外墙窗台下压顶', '依附于梁的砼线条', '排烟井砌体墙压顶', '排烟井上部梁的外挂'].map((t, i) => (
        <TreeRow key={t} $in={30} $on={i === 3}><Gear /><span>{t}</span></TreeRow>
      ))}
    </White>
    <Bar $h={2} />
    <PanelHead><span>图纸管理</span><PinClose /></PanelHead>
    <SheetTabs><button>图纸文件列表</button><button>图纸楼层对照表</button></SheetTabs>
    <Bar $h={16} $pad={3} $gap={1}>
      <Mini $box>添加图纸</Mini><Mini $box aria-label="更多图纸"><Caret $s={2} /></Mini><Mini $box>整理图纸</Mini><Mini $box>定位图纸</Mini><Mini $box>手动分割</Mini><Push>»</Push>
    </Bar>
    <SheetArea $h={130}>
      <SheetTable>
        <colgroup><col width="17" /><col /><col width="39" /></colgroup>
        <thead><tr><th /><th>图纸名称</th><th>图纸比例</th></tr></thead>
        <tbody>
          {sheets.map(([n, t, k]) => (
            <SheetRow key={n} $kind={k}><th scope="row">{n}</th><td>{k === 'file' ? <CellLine><Plus aria-label="收起">-</Plus>{t}</CellLine> : t}</td><td>1:1</td></SheetRow>
          ))}
        </tbody>
      </SheetTable>
      <ScrollBar><Tri $d="up" $s={3} /><Thumb $h={19} $top={69} /><Tri $d="down" $s={3} /></ScrollBar>
    </SheetArea>
    <Bar $h={4} />
    <PanelHead><span>CAD图层显示</span><PinClose /></PanelHead>
    <White>
      <TreeRow $in={8}>▹<Tick type="checkbox" id="l1" /><label htmlFor="l1">已提取的CAD图层</label></TreeRow>
      <TreeRow $in={8}>▹<Tick type="checkbox" id="l2" defaultChecked /><label htmlFor="l2">CAD原始图层</label></TreeRow>
    </White>
  </Column>
);

const PlanPanel = () => (
  <Column $w={84}>
    <Bar $h={16} $pad={7}><Mini><Pencil size={10} />删除</Mini><Push>»</Push></Bar>
    <Bar $h={16} $pad={7}><Mini>第1层<Caret $s={2} /></Mini><Push>»</Push></Bar>
    <Bar $h={16} $pad={7}><Mini><Ruler size={10} />两点</Mini><Push>»</Push></Bar>
    <Bar $h={16} $pad={6}><Mini $box><MousePointer2 size={8} />选择</Mini><Caret $s={2} /><Push>»</Push></Bar>
    <Canvas><PlanDrawing /></Canvas>
    <Bar $h={17} $pad={7}><Mini><svg width="10" height="9" viewBox="0 0 10 9"><path d="M0 1h9M3 0v9" stroke="#c55" /><path d="M5 4l4 4" stroke="#2f74c8" /></svg>正交</Mini><Push>»</Push></Bar>
  </Column>
);

const PropPanel = () => (
  <Column>
    <PanelHead $blue><span>属性编辑器</span><PinClose /></PanelHead>
    <White>
      <PropTable>
        <colgroup><col width="15" /><col width="83" /><col /><col width="21" /></colgroup>
        <thead><tr><th /><th>属性名称</th><th>属性值</th><th>附加</th></tr></thead>
        <tbody>
          {props.map(([n, name, value, c, kind, box]) => (
            <PropRow key={n} $c={c} $kind={kind} $on={n === 2}>
              <th scope="row">{n}</th>
              <td><CellLine>{kind === 'sub' && <Dash />}{kind === 'group' && <Plus aria-label={name}>{n === 11 ? '-' : '+'}</Plus>}{name}</CellLine></td>
              <td>{n === 2 ? <ValueCell>{value}<CellDrop aria-label="选择宽度"><Caret $s={2} /></CellDrop></ValueCell> : value}</td>
              <td>{box && <Tick type="checkbox" aria-label={`附加 ${name}`} />}</td>
            </PropRow>
          ))}
        </tbody>
      </PropTable>
    </White>
  </Column>
);

const GgjWindow = () => (
  <Win $right>
    <WinTitle>
      <svg width="11" height="9" viewBox="0 0 11 9"><rect width="11" height="9" rx="2" fill="#1787e0" /><path d="M1 4.500h3M7 4.500h3M5.500 1v7M3.500 3v3M7.500 3v3" stroke="#fff" /></svg>
      广联达BIM钢筋算量软件 GGJ2013 - [F:\日记\7月7日\2017.6.29\2017.6.24\2017.6.24\山东迪趣华府2#楼.GGJ12]
      <Push />
      <CaptionButtons />
    </WinTitle>
    <MenuBar $h={16} $gap={7} $pad={5}>
      {menus.map(m => <Mini key={m}>{m}</Mini>)}
      <Mini><File size={9} />新建变更<Caret $s={2} /></Mini>
      <svg width="10" height="9" viewBox="0 0 10 9"><circle cx="5" cy="4.500" r="4" fill="#2d9be0" /><path d="M2 5h6" stroke="#fff" /></svg>
    </MenuBar>
    <MenuBar $h={15} $gap={7} $pad={2} $end>
      <Mini><User size={9} fill="#2f74c8" />登录</Mini><Mini>造价豆:0</Mini><Mini aria-label="通知"><Bell size={9} fill="#2f74c8" /></Mini><Mini><MessageSquareMore size={10} />我要建议</Mini>
    </MenuBar>
    <Bar $h={18} $gap={8} $pad={4}>
      <Mini aria-label="新建"><File size={10} /></Mini><Mini aria-label="打开"><FolderIcon /><Caret $s={2} /></Mini><Mini aria-label="保存"><Save size={10} /></Mini>
      <Split />
      <Mini aria-label="撤销"><Undo2 size={10} /><Caret $s={2} /></Mini><b>»</b>
      <Mini><Leaf k="door" />定义</Mini><Mini><b>Σ</b>汇总计算</Mini>
      <Mini><svg width="11" height="10" viewBox="0 0 11 10"><path d="M.5.500h10v9H.500z" fill="#fff" stroke="#198ed8" strokeWidth="2" /><path d="M3 5l2 2 3-4" fill="none" stroke="#198ed8" /></svg>云检查</Mini>
      <Mini><Leaf k="brick" />平齐板顶</Mini><Mini><Binoculars size={10} />查找图元</Mini><Mini><Glasses size={10} />查看钢筋量</Mini><Mini><Leaf k="scan" />批量选择</Mini>
      <BarGroup $gap={8}>
        <b>»</b><Mini><Leaf k="window" />二维<Caret $s={2} /></Mini><Mini><Box size={10} />俯视<Caret $s={2} /></Mini><Mini><svg width="11" height="9" viewBox="0 0 11 9"><path d="M1 6l5-5h4l-2 5-5 3z" fill="#3bab4c" stroke="#20609c" /></svg>动态观察</Mini><b>»</b>
      </BarGroup>
    </Bar>
    <Body><NavPanel /><ListPanel /><PlanPanel /><PropPanel /></Body>
  </Win>
);

const qr = ['1111111011010111111100', '1000001010110100000100', '1011101001011101110100', '1011101011001001110100'];

export default function App() {
  return (
    <Page>
      <Global />
      <TitleBar>
        <AppName>360安全浏览器 8.1</AppName>
        <Logo><ELogo /></Logo>
        <ImeBar>
          <SogouIcon />
          <ImeKeys><span>中</span><svg width="12" height="12" viewBox="0 0 12 12"><circle cx="2.500" cy="4" r="1.700" fill="none" stroke="currentColor" strokeWidth="1.300" /><path d="M9 6c2 2 1 4-1 5" stroke="currentColor" strokeWidth="2" fill="none" /></svg>
            <Mic size={15} fill="currentColor" /><Keyboard size={16} /><User size={15} color="#b5bfd2" fill="#b5bfd2" /><Shirt size={15} fill="currentColor" /><Wrench size={15} fill="currentColor" /></ImeKeys>
        </ImeBar>
        <Menu><span>»</span><a href="#file">文件</a><a href="#view">查看</a><a href="#fav">收藏</a><a href="#tools">工具</a><a href="#help">帮助</a></Menu>
        <SkinButton aria-label="皮肤"><Shirt size={17} fill="#6fcf3a" color="#8fdc5a" /></SkinButton>
        <Speed>73</Speed>
        <WinButton aria-label="最小化"><svg width="12" height="12" viewBox="0 0 12 12"><path d="M1 9.500h6" stroke="#fff" strokeWidth="3" /></svg></WinButton>
        <WinButton aria-label="还原"><svg width="12" height="12" viewBox="0 0 12 12"><path d="M4 3V1h7v7H9M1 4.500h7V11H1z" fill="none" stroke="#fff" strokeWidth="1.500" /></svg></WinButton>
        <WinButton $red aria-label="关闭"><X size={17} strokeWidth={3} color="#fff" /></WinButton>
      </TitleBar>

      <ToolBar>
        <Tool $w={58} $start><RoundArrow /><Grey>后退</Grey></Tool>
        <Tool $w={38} aria-label="前进"><RoundArrow flip /></Tool>
        <Tool $w={36} aria-label="停止"><PageIcon kind="stop" /></Tool>
        <Tool $w={32} aria-label="刷新"><PageIcon kind="reload" /></Tool>
        <Tool $w={40} aria-label="收藏"><StarIcon /></Tool>
        <Tool $w={36} aria-label="主页"><HomeIcon /></Tool>
        <Tool $w={74} $start><UndoIcon /><Restore>恢复</Restore><Caret /></Tool>
        <Tool $w={36} aria-label="手机"><PhoneIcon /></Tool>
        <Tool $w={36} aria-label="云"><CloudIcon /></Tool>
        <PairGroup>
          <Pair type="button" aria-label="扩展"><AppsIcon /><Caret /></Pair>
          <Pair type="button" aria-label="网银"><ShieldIcon /><Caret /></Pair>
          <Pair type="button" aria-label="翻译"><AaIcon /><Caret /></Pair>
          <Pair type="button" aria-label="截图"><ClipIcon /><Caret /></Pair>
          <Pair type="button" aria-label="密码"><KeyIcon /></Pair>
        </PairGroup>
      </ToolBar>

      <AddressBar>
        <Field as="div">
          <svg width="24" height="20" viewBox="0 0 24 20"><circle cx="12" cy="10" r="6.500" fill="#eaf5ff" stroke="#6ba6dc" strokeWidth="2.500" /></svg>
          <Url>http://e.<b>fwxgx.com</b>/question_1605865.html</Url>
          <Aperture size={14} color="#2fbf6b" strokeWidth={3} />
          <svg width="20" height="16" viewBox="0 0 20 16"><path d="M15 0L5 9h5l-4 7 10-9h-5z" fill="#2fc56b" /></svg>
          <DropButton type="button" aria-label="历史地址"><svg width="8" height="6" viewBox="0 0 8 6"><path d="M1 1l3 3 3-3" fill="none" stroke="#39507f" strokeWidth="2" /></svg></DropButton>
        </Field>
        <Go type="button"><GreenSquare><ArrowRight size={15} color="#fff" strokeWidth={3} /></GreenSquare>访问</Go>
        <Field $w={199}>
          <svg width="31" height="22" viewBox="0 0 31 22"><circle cx="13" cy="11" r="6" fill="none" stroke="#1db35a" strokeWidth="3" /><path d="M8 14c3 4 8 4 10 1" fill="none" stroke="#f9a91c" strokeWidth="3" /><circle cx="21.500" cy="17" r="1.300" fill="#f9a91c" /><path d="M24 15h5l-2.500 3z" fill="#444" /></svg>
          <SearchInput placeholder="习近平会见新加坡总理" aria-label="搜索" />
        </Field>
        <Go type="button" $boxed><GreenSquare><Search size={13} color="#fff" strokeWidth={3} /></GreenSquare>搜索</Go>
      </AddressBar>

      <Viewport>
        <Stage>
          <Question>
            <Mark>?</Mark>
            <QuestionText>我用图集建立构件的时候，在输入界面宽度的时候出现了" "请输入<br />（0,50000）之间的整数且&gt;轴线距梁左</QuestionText>
            <Meta>湖北 | <User size={12} fill="currentColor" /> 迷迷糊 | 2017-07-07 15:13:22</Meta>
          </Question>
          <PageFoot>
            服务APP下载
            <svg width="82" height="16" viewBox="0 0 22 4" preserveAspectRatio="none" fill="#0c0c0c">{qr.map((r, y) => [...r].map((c, x) => c === '1' && <rect key={`${x}-${y}`} x={x} y={y} width="1.050" height="1.050" />))}</svg>
          </PageFoot>

          <SendBar>
            <SendButton $w={124}><svg width="15" height="17" viewBox="0 0 15 17"><path d="M4 1h10v15H4zM4 12h10" fill="#e3f3ff" stroke="#3aa6ee" strokeWidth="1.500" /><path d="M1 11c0-5 3-6 7-6V2l5 4-5 4V7" fill="#ff6a3c" /></svg><span>发送图片到手机</span></SendButton>
            <SendButton $w={31} aria-label="全屏"><svg width="13" height="13" viewBox="0 0 13 13"><path d="M1 1l11 11M12 1L1 12M1 5V1h4M8 1h4v4M12 8v4H8M5 12H1V8" stroke="currentColor" fill="none" strokeWidth="1.400" /></svg></SendButton>
            <SendButton $w={31} aria-label="保存"><svg width="15" height="15" viewBox="0 0 15 15"><path d="M1 1h13v13H3l-2-2zM4 1v5h7V1M4.500 14V9.500h6V14M8 11v2" stroke="currentColor" fill="none" strokeWidth="1.300" /></svg></SendButton>
            <SendButton $w={31} aria-label="分享"><svg width="15" height="15" viewBox="0 0 15 15"><path d="M7 1.500H1v12h12V9M4 10c0-5 3-7 9-7M10 .500L13.500 3 10 6" stroke="currentColor" fill="none" strokeWidth="1.200" /></svg></SendButton>
            <SendButton $w={31} aria-label="设置"><Settings size={16} strokeWidth={1.75} /></SendButton>
          </SendBar>

          <Shot>
            <CadWindow />
            <GgjWindow />
            <Dialog role="dialog" aria-label="提示">
              <DialogTitle>提示</DialogTitle>
              <DialogBody>
                <svg width="20" height="20" viewBox="0 0 20 20"><circle cx="10" cy="10" r="9.300" fill="#2350c4" stroke="#b5bccb" strokeWidth="1.500" /><path d="M3 8c2-7 12-7 14 0-4 2-10 2-14 0z" fill="#6f93ea" /><path d="M10 4.500v2.500M10 8.500v7" stroke="#fff" strokeWidth="2.500" /></svg>
                <p>请输入(0,50000]之间的整数且&gt;=轴线距梁左边线距<br />离，且大于保护层的两倍</p>
              </DialogBody>
              <DialogFoot><button>确定</button></DialogFoot>
            </Dialog>
            <MarkUp width="1320" height="548" viewBox="14 128 1320 548" fill="none" stroke="#f00">
              <path d="M698 252L1038 355" strokeWidth="3" />
              <path d="M1050 359l-14-9 3 5-5 4z" fill="#f00" strokeWidth="2" />
              <ellipse cx="1133" cy="356.500" rx="70" ry="19" strokeWidth="8" />
            </MarkUp>
            <Note>更改为<b>15mm</b>，试试</Note>
          </Shot>

          <CloseViewer aria-label="关闭图片"><X size={26} strokeWidth={2.5} /></CloseViewer>
          <SideStack>
            <SideButton $grey href="#top" aria-label="返回顶部"><svg width="24" height="20" viewBox="0 0 24 20"><path d="M1 2h22M2 18L12 8l10 10" stroke="#fff" strokeWidth="2.500" fill="none" /></svg></SideButton>
            <SideButton href="#follow">关注我们</SideButton>
            <SideButton href="#qq">Q Q<br />咨询</SideButton>
          </SideStack>
        </Stage>
        <PageScrollV><Tri $d="up" /><PageThumbV /><Tri $d="down" /></PageScrollV>
      </Viewport>
      <PageScrollH><Tri $d="left" $c="#999" /><PageThumbH /><Tri $d="right" /></PageScrollH>

      <StatusBar>
        <StatusItem><Gift size={15} color="#f5a27e" strokeWidth={2} />今日优选</StatusItem>
        <StatusItem $push><CirclePlay size={16} color="#1fae4e" />今日直播</StatusItem>
        <StatusItem $ml={19} $c="#16a545"><Smartphone size={16} />跨屏浏览</StatusItem>
        <StatusItem $ml={15} aria-label="安全"><svg width="16" height="16" viewBox="0 0 16 16"><circle cx="8" cy="8" r="7" fill="#e7edf5" stroke="#a5b6ca" /><path d="M8 5v6M5 8h6" stroke="#c4161c" strokeWidth="2.500" /></svg></StatusItem>
        <StatusItem $ml={15} $c="#222"><Rocket size={14} />加速器</StatusItem>
        <StatusItem $ml={14} $c="#222"><svg width="14" height="16" viewBox="0 0 14 16"><path d="M4 1h6v7h4l-7 8-7-8h4z" fill="#6cc414" stroke="#3f8c0a" /></svg>下载</StatusItem>
        <StatusItem $ml={17} aria-label="浏览器"><svg width="16" height="16" viewBox="0 0 16 16"><path d="M3 8.500h10c0-6-10-6-10 0 0 6 8 6 10 2" fill="none" stroke="#2b8ddf" strokeWidth="2.500" /><path d="M1 14C-1 11 10 0 15 2" stroke="#f3b81e" fill="none" strokeWidth="1.500" /></svg></StatusItem>
        <StatusItem $ml={18} aria-label="窗口"><svg width="16" height="15" viewBox="0 0 16 15"><path d="M4 1h11v9H4z" fill="#9fc8ef" stroke="#6a9fd0" /><path d="M1 4h10v9H1z" fill="#fff" stroke="#7a9cc0" /></svg></StatusItem>
        <StatusItem $ml={17} aria-label="声音"><Volume2 size={16} color="#7f8898" /></StatusItem>
        <StatusItem $ml={13} $c="#1fae4e"><svg width="15" height="16" viewBox="0 0 15 16"><path d="M9 10l5 5" stroke="#777" strokeWidth="3" /><circle cx="6.500" cy="6.500" r="5.500" fill="#aad7ff" stroke="#3b87d8" strokeWidth="1.500" /></svg>110%</StatusItem>
      </StatusBar>

      <TaskBar>
        <Start aria-label="开始"><svg width="17" height="17" viewBox="0 0 17 17" fill="#fff"><path d="M0 2.500l7-1V8H0zM8 1.300L17 0v8H8zM0 9h7v6.500l-7-1zM8 9h9v8l-9-1.300z" /></svg></Start>
        <TaskSearch>
          <svg width="22" height="22" viewBox="0 0 22 22"><circle cx="11" cy="11" r="8.800" fill="none" stroke="#f5f5f5" strokeWidth="3" /></svg>
          <input placeholder="在这里输入你要搜索的内容" aria-label="任务栏搜索" />
          <Mic size={17} strokeWidth={1.5} />
        </TaskSearch>
        <TaskApp aria-label="风扇"><svg width="22" height="22" viewBox="0 0 22 22" fill="#e5e5e5"><path d="M10.500 8.500C4 11 0 8 1 4.500 3-1 13-1 12 6c-.3 2-3 4-6 2M13.500 10.500C11 4 14 0 17.500 1 23 3 23 13 16 12c-2-.3-4-3-2-6M11.500 13.500C18 11 22 14 21 17.500 19 23 9 23 10 16c.3-2 3-4 6-2M8.500 11.500C11 18 8 22 4.500 21-1 19-1 9 6 10c2 .3 4 3 2 6" /></svg></TaskApp>
        <TaskApp aria-label="浏览助手"><svg width="20" height="22" viewBox="0 0 20 22" fill="none" stroke="#d5d5d5" strokeWidth="1.500"><path d="M19 1C10 1 2 4 2 12c0 5 3 8 7 8 5 0 9-4 8-9l-5 1M19 1c-2 5-7 2-11 6-3 4-2 9 2 9 3 0 4-2 4-4" /></svg></TaskApp>
        <TaskApp $gap aria-label="Edge"><svg width="21" height="22" viewBox="0 0 21 22"><path d="M1 10C2-3 20-2 20 12H7c0 7 8 7 12 4v4C11 24 2 20 3 12c0-3 3-6 5-6 0 0-1 1-1 3h7C14 3 6 3 1 10z" fill="#0a78d7" /></svg></TaskApp>
        <TaskApp aria-label="应用商店"><svg width="22" height="24" viewBox="0 0 22 24"><path d="M1 7l20-2v18L1 21z" fill="#fff" /><path d="M7 8V4c0-4 7-4 7 0v3" stroke="#fff" fill="none" strokeWidth="1.500" /><path d="M6 11l4-.5V14H6zM11 10.400l5-.5V14h-5zM6 15h4v3.500L6 18zM11 15h5v4l-5-.5z" fill="#04101a" /></svg></TaskApp>
        <TaskApp aria-label="文件夹"><svg width="22" height="19" viewBox="0 0 22 19"><path d="M0 1h9l2 2h11v15H0z" fill="#ffe28c" /><path d="M0 1h7v3H0z" fill="#e8a33a" /><path d="M4 19v-9h14v9h-4v-5H8v5z" fill="#35a7e8" /></svg></TaskApp>
        <TaskApp $open aria-label="G浏览器"><svg width="24" height="24" viewBox="0 0 24 24"><path d="M23 1C11-1 1 4 1 13c0 6 4 10.500 10.500 10.500C18 23.500 23 19 22 11l-8 2c3 0 4 5-1 6-6 1-8-6-4-9 4-3 12 0 14-9z" fill="#1d9cf5" /></svg></TaskApp>
        <TaskApp $open $active aria-label="360浏览器"><svg width="24" height="24" viewBox="0 0 24 24"><circle cx="12" cy="12" r="11" fill="#5fca2e" /><path d="M7 13h11c0-9-12-8-12 0 0 7 9 7 11 3" fill="none" stroke="#fff" strokeWidth="3" /><path d="M2 17C0 12 14 2 22 4" fill="none" stroke="#d8f7c4" strokeWidth="1.500" /></svg></TaskApp>
        <TaskApp $open aria-label="广联达"><svg width="24" height="24" viewBox="0 0 24 24"><rect width="24" height="24" rx="4" fill="#1293f5" /><path d="M16 5c-2-1-4 0-4 2v10c0 2-2 3-4 2M4 11c0 2 1 2 3 2h10c2 0 3 0 3-2M5 16c2 1 4 0 5-3M19 16c-2 1-4 0-5-3" stroke="#fff" strokeWidth="2" fill="none" /></svg></TaskApp>
        <TaskApp $open aria-label="画图"><svg width="24" height="24" viewBox="0 0 24 24"><rect width="24" height="24" rx="2" fill="#f79a16" /><path d="M3 4l12-1v17l-11 1z" fill="#fff6d8" /><path d="M6 8h6M6 11h6M6 14h4" stroke="#b5651d" /><path d="M22 2L11 16l-1 4 4-2L23 5z" fill="#c4411a" /></svg></TaskApp>
        <Tray>
          <ChevronUp size={16} /><BatteryCharging size={17} strokeWidth={1.5} /><Wifi size={16} strokeWidth={1.5} /><Volume2 size={16} strokeWidth={1.5} />
          <Clock>15:21<br />2017/7/7</Clock>
          <MessageSquare size={18} strokeWidth={1.5} />
        </Tray>
      </TaskBar>
    </Page>
  );
}
